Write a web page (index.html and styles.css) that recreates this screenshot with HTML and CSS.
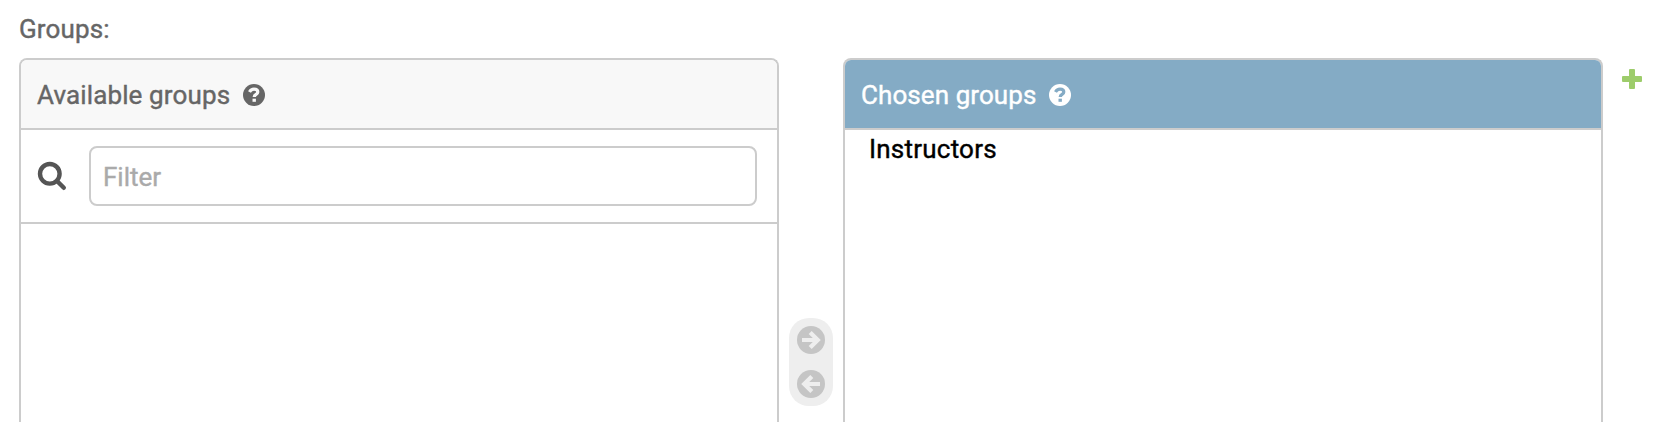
FILE: index.html
```
<!DOCTYPE html>
<html lang="en">
<head>
<meta charset="utf-8">
<title>Groups</title>
<link rel="stylesheet" href="styles.css">
</head>
<body>
<label class="field-label">Groups:</label>
<div class="selector">
  <section class="panel">
    <h2 class="panel-title"><span>Available groups</span>
      <svg class="help" viewBox="0 0 22 22"><circle cx="11" cy="11" r="11" fill="currentColor"/><path class="mark" d="M6.5 8.1C7.5 6.2 9 5.2 11 5.2c2.2 0 3.8 1.2 3.8 2.9 0 2.3-3.6 2.4-3.6 4.9"/><rect class="dot" x="9.5" y="14.7" width="3.4" height="3.1"/></svg>
    </h2>
    <div class="filter">
      <svg class="search" viewBox="0 0 30 30"><circle cx="12.8" cy="12.8" r="9.8"/><path d="M20 20L26.8 26.8"/></svg>
      <input class="filter-input" type="text" placeholder="Filter">
    </div>
  </section>
  <div class="chooser">
    <svg class="arrow" viewBox="0 0 28 28"><circle cx="14" cy="14" r="14"/><path d="M5 14H20M13.2 6.4L20.8 14L13.2 21.6"/></svg>
    <svg class="arrow" viewBox="0 0 28 28"><circle cx="14" cy="14" r="14"/><path d="M23 14H8M14.8 6.4L7.2 14L14.8 21.6"/></svg>
  </div>
  <section class="panel">
    <h2 class="panel-title chosen"><span>Chosen groups</span>
      <svg class="help" viewBox="0 0 22 22"><circle cx="11" cy="11" r="11" fill="currentColor"/><path class="mark" d="M6.5 8.1C7.5 6.2 9 5.2 11 5.2c2.2 0 3.8 1.2 3.8 2.9 0 2.3-3.6 2.4-3.6 4.9"/><rect class="dot" x="9.5" y="14.7" width="3.4" height="3.1"/></svg>
    </h2>
    <div class="option">Instructors</div>
  </section>
  <svg class="add" viewBox="0 0 20 20"><rect x="7" width="6" height="20" rx="1"/><rect y="7" width="20" height="6" rx="1"/></svg>
</div>
</body>
</html>
```
FILE: styles.css
```
* { box-sizing: border-box; }
body {
  margin: 0;
  height: 422px;
  overflow: hidden;
  background: #fff;
  color: #666;
  font: 400 26px/30px Roboto, sans-serif;
  letter-spacing: .13px;
  -webkit-text-stroke: .4px;
}
.field-label { display: block; height: 58px; padding: 14px 0 0 19px; }
.selector { display: flex; align-items: flex-start; padding-left: 19px; }
.panel {
  width: 760px;
  height: 364px;
  flex: none;
  border: 2px solid #ccc;
  border-bottom: 0;
  border-radius: 8px 8px 0 0;
  overflow: hidden;
}
.panel-title {
  display: flex;
  align-items: center;
  gap: 13px;
  height: 70px;
  margin: 0;
  padding: 1px 16px 0;
  border-bottom: 2px solid #ccc;
  background: #f8f8f8;
  font: inherit;
  --panel-bg: #f8f8f8;
}
.chosen { background: #84abc5; color: #fff; --panel-bg: #84abc5; }
.chosen span { letter-spacing: .08px; }
.help { width: 22px; height: 22px; }
.mark { fill: none; stroke: var(--panel-bg); stroke-width: 3.2; }
.dot { fill: var(--panel-bg); }
.filter {
  display: flex;
  align-items: center;
  height: 94px;
  padding: 0 20px 0 16px;
  border-bottom: 2px solid #ccc;
}
.search {
  width: 30px;
  height: 30px;
  margin-right: 22px;
  fill: none;
  stroke: #555;
  stroke-width: 4.4;
  stroke-linecap: round;
}
.filter-input {
  flex: 1;
  min-width: 0;
  height: 60px;
  padding: 1px 12px 0;
  border: 2px solid #ccc;
  border-radius: 8px;
  font: inherit;
}
.filter-input::placeholder { color: #aaa; }
.chooser {
  display: flex;
  flex-direction: column;
  align-items: center;
  gap: 16px;
  width: 44px;
  height: 88px;
  margin: 260px 10px 0;
  padding-top: 8px;
  border-radius: 20px;
  background: #eee;
}
.arrow { width: 28px; height: 28px; fill: #c5c5c5; }
.arrow path { fill: none; stroke: #eee; stroke-width: 4.2; }
.option { padding: 4px 24px; color: #000; letter-spacing: .22px; }
.add { width: 20px; height: 20px; margin: 11px 0 0 19px; fill: #9dcc6b; }
```
